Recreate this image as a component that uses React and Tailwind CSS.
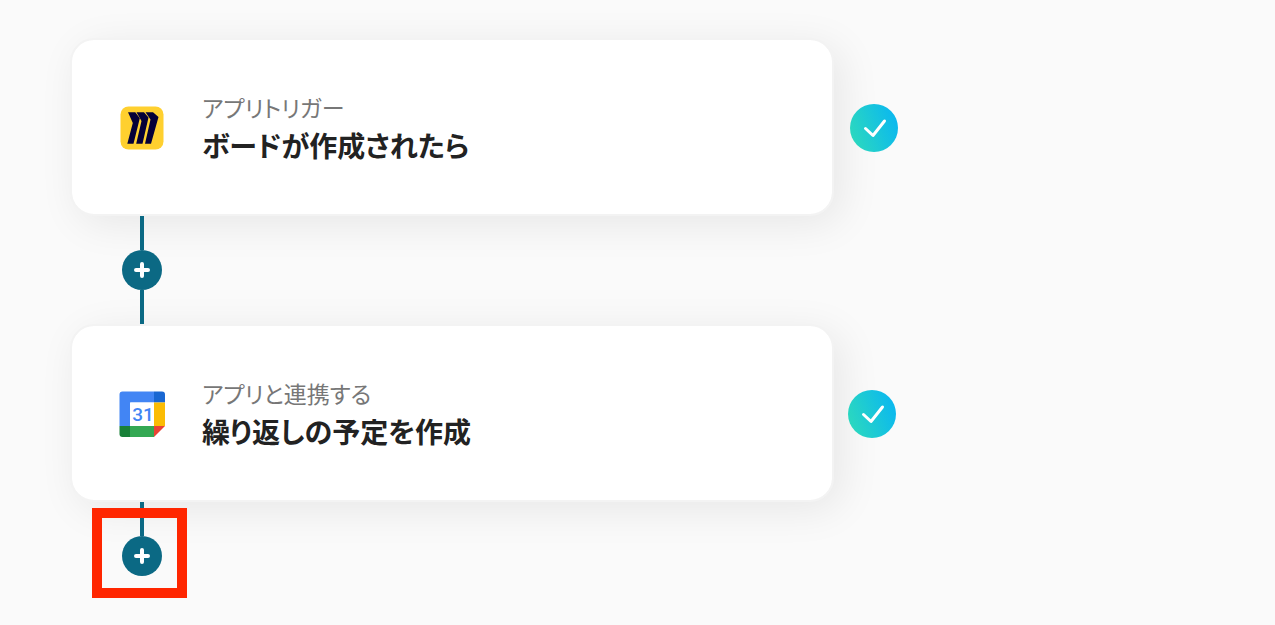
import React from "react";

const steps = [
  {
    id: "trigger",
    label: "アプリトリガー",
    title: "ボードが作成されたら",
    Icon: MiroIcon,
    statusGap: "gap-4",
  },
  {
    id: "action",
    label: "アプリと連携する",
    title: "繰り返しの予定を作成",
    Icon: CalendarIcon,
    statusGap: "gap-3.5",
  },
];

function MiroIcon() {
  return (
    <svg viewBox="0 0 48 48" className="h-12 w-12 shrink-0" aria-hidden="true">
      <rect x="2.500" y="2.500" width="43" height="43" rx="8" fill="#ffd02f" />
      <g fill="#050038">
        <path d="M10 8.300h7.300l4.500 6L15.500 39.700H9.300L14.800 19z" />
        <path d="M18.500 8.300h7.500l4.500 5.200-6 26.200H18.200L23.500 17z" />
        <path d="M27.500 8.300h7.500l5.500 4.700-7.500 26.700H27L32.500 15.500z" />
      </g>
    </svg>
  );
}

function CalendarIcon() {
  return (
    <svg viewBox="0 0 48 48" className="h-12 w-12 shrink-0" aria-hidden="true">
      <path d="M4.500 1.500H36v11H12.500V36h-11V4.500a3 3 0 0 1 3-3z" fill="#4285f4" />
      <path d="M36 1.500h8a3 3 0 0 1 3 3v8H36z" fill="#1967d2" />
      <path d="M36 12.500h11V36H36z" fill="#fbbc04" />
      <path d="M12 36h24v11H12z" fill="#34a853" />
      <path d="M1.500 36H12v11H4.500a3 3 0 0 1-3-3z" fill="#188038" />
      <path d="M36 36h11L36 47z" fill="#ea4335" />
      <path d="M12 12.500h24V36H12z" fill="#fff" />
      <text
        x="25"
        y="31"
        textAnchor="middle"
        fontFamily="Roboto, sans-serif"
        fontSize="19"
        fontWeight="500"
        fill="#4285f4"
      >
        31
      </text>
    </svg>
  );
}

function StatusBadge() {
  return (
    <span
      role="img"
      aria-label="設定済み"
      className="mt-0.5 flex h-12 w-12 shrink-0 items-center justify-center rounded-full bg-linear-[70deg] from-[#2fdcb9] to-[#07b4f5]"
    >
      <svg viewBox="0 0 48 48" className="h-12 w-12" aria-hidden="true">
        <path
          d="M15.500 24.500l7.500 7L34.500 17"
          fill="none"
          stroke="#fff"
          strokeWidth="3"
          strokeLinecap="round"
          strokeLinejoin="round"
        />
      </svg>
    </span>
  );
}

function StepCard({ step }) {
  const { Icon } = step;
  return (
    <div className={`flex items-center ${step.statusGap}`}>
      <button
        type="button"
        className="flex h-[178px] w-full max-w-[764px] items-center gap-9 rounded-3xl border-2 border-[#f3f3f3] bg-white bg-clip-padding px-[46px] pt-0.5 text-left shadow-[8px_8px_40px_rgba(0,0,0,0.08)]"
      >
        <Icon />
        <span className="flex flex-col pt-0.5">
          <span className="text-[23px] leading-8 text-[#777777]">{step.label}</span>
          <span className="text-[28px] leading-11 font-bold text-[#222222]">{step.title}</span>
        </span>
      </button>
      <StatusBadge />
    </div>
  );
}

function AddButton() {
  return (
    <button
      type="button"
      aria-label="ステップを追加"
      className="flex h-10 w-10 items-center justify-center rounded-full bg-[#0b6984]"
    >
      <svg viewBox="0 0 16 16" className="h-4 w-4" aria-hidden="true">
        <path d="M8 2v12M2 8h12" stroke="#fff" strokeWidth="4" strokeLinecap="round" />
      </svg>
    </button>
  );
}

function Connector({ last }) {
  return (
    <div className="relative flex w-36 flex-col items-center">
      <div className="h-[34px] w-1 bg-[#0b6984]" />
      <AddButton />
      {!last && <div className="h-[34px] w-1 bg-[#0b6984]" />}
      {last && (
        <div className="pointer-events-none absolute top-1.5 left-[22px] h-[90px] w-[95px] border-10 border-[#ff2600]" />
      )}
    </div>
  );
}

export default function App() {
  return (
    <main
      lang="ja"
      className="min-h-screen bg-[#fafafa] px-[70px] pt-[38px] font-['Noto_Sans_CJK_JP',sans-serif] [font-feature-settings:'palt']"
    >
      {steps.map((step, i) => (
        <React.Fragment key={step.id}>
          <StepCard step={step} />
          <Connector last={i === steps.length - 1} />
        </React.Fragment>
      ))}
    </main>
  );
}
